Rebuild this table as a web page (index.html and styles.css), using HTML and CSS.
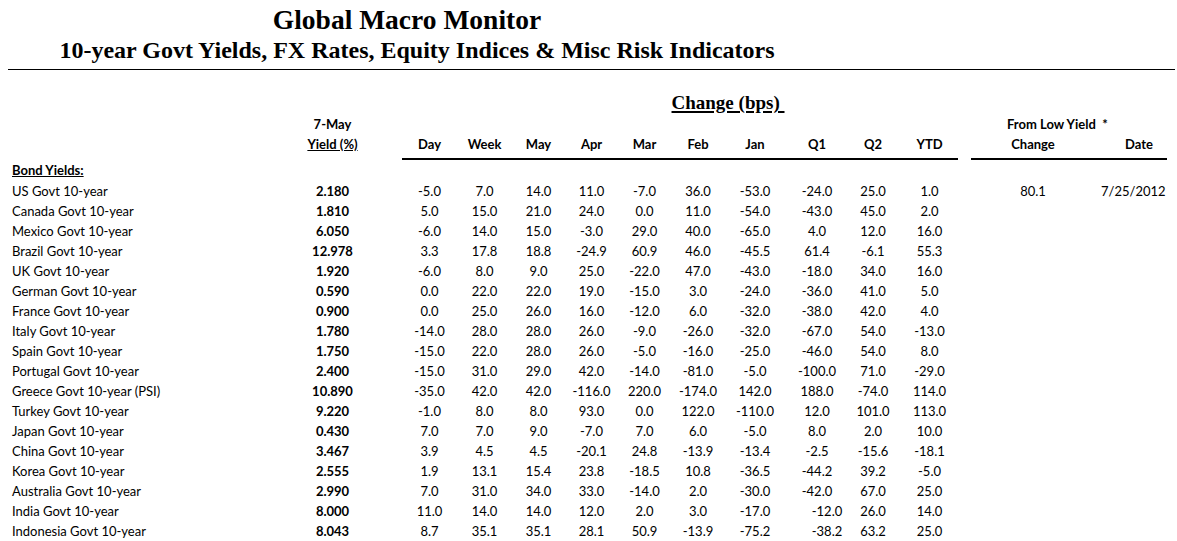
FILE: index.html
```html
<!DOCTYPE html>
<html>
<head>
<meta charset="utf-8">
<link rel="stylesheet" href="styles.css">
</head>
<body>
<header class="head">
  <h1 class="title">Global Macro Monitor</h1>
  <h2 class="subtitle">10-year Govt Yields, FX Rates, Equity Indices &amp; Misc Risk Indicators</h2>
</header>
<div class="rule"></div>
<table class="grid">
  <colgroup>
    <col class="c-label"><col class="c-yield"><col class="c-gap">
    <col class="c55"><col class="c55"><col class="c53"><col class="c53"><col class="c53"><col class="c54"><col class="c60"><col class="c60"><col class="c56"><col class="c57">
    <col class="c-gap2"><col class="c-chg"><col class="c-date">
  </colgroup>
  <thead>
    <tr class="r-top">
      <th colspan="8"></th>
      <th colspan="2" class="bps"><span>Change (bps)&nbsp;</span></th>
      <th colspan="6"></th>
    </tr>
    <tr class="r-h1">
      <th></th>
      <th class="hd">7-May</th>
      <th colspan="12"></th>
      <th colspan="2" class="low">From Low Yield &nbsp;*</th>
    </tr>
    <tr class="r-h2">
      <th></th>
      <th class="hd"><u>Yield (%)</u></th>
      <th></th>
      <th class="hd ul">Day</th><th class="hd ul">Week</th><th class="hd ul">May</th><th class="hd ul">Apr</th><th class="hd ul">Mar</th><th class="hd ul">Feb</th><th class="hd ul">Jan</th><th class="hd ul q1">Q1</th><th class="hd ul">Q2</th><th class="hd ul">YTD</th>
      <th></th>
      <th class="hd ul">Change</th><th class="hd ul dateh">Date</th>
    </tr>
  </thead>
  <tbody>
    <tr class="r-sec"><td class="label sec"><u>Bond Yields:</u></td><td colspan="15"></td></tr>
    <tr><td class="label">US Govt 10-year</td><td class="y">2.180</td><td></td><td>-5.0</td><td>7.0</td><td>14.0</td><td>11.0</td><td>-7.0</td><td>36.0</td><td>-53.0</td><td class="q1">-24.0</td><td>25.0</td><td>1.0</td><td></td><td>80.1</td><td class="date">7/25/2012</td></tr>
    <tr><td class="label">Canada Govt 10-year</td><td class="y">1.810</td><td></td><td>5.0</td><td>15.0</td><td>21.0</td><td>24.0</td><td>0.0</td><td>11.0</td><td>-54.0</td><td class="q1">-43.0</td><td>45.0</td><td>2.0</td><td></td><td></td><td></td></tr>
    <tr><td class="label">Mexico Govt 10-year</td><td class="y">6.050</td><td></td><td>-6.0</td><td>14.0</td><td>15.0</td><td>-3.0</td><td>29.0</td><td>40.0</td><td>-65.0</td><td class="q1">4.0</td><td>12.0</td><td>16.0</td><td></td><td></td><td></td></tr>
    <tr><td class="label">Brazil Govt 10-year</td><td class="y">12.978</td><td></td><td>3.3</td><td>17.8</td><td>18.8</td><td>-24.9</td><td>60.9</td><td>46.0</td><td>-45.5</td><td class="q1">61.4</td><td>-6.1</td><td>55.3</td><td></td><td></td><td></td></tr>
    <tr><td class="label">UK Govt 10-year</td><td class="y">1.920</td><td></td><td>-6.0</td><td>8.0</td><td>9.0</td><td>25.0</td><td>-22.0</td><td>47.0</td><td>-43.0</td><td class="q1">-18.0</td><td>34.0</td><td>16.0</td><td></td><td></td><td></td></tr>
    <tr><td class="label">German Govt 10-year</td><td class="y">0.590</td><td></td><td>0.0</td><td>22.0</td><td>22.0</td><td>19.0</td><td>-15.0</td><td>3.0</td><td>-24.0</td><td class="q1">-36.0</td><td>41.0</td><td>5.0</td><td></td><td></td><td></td></tr>
    <tr><td class="label">France Govt 10-year</td><td class="y">0.900</td><td></td><td>0.0</td><td>25.0</td><td>26.0</td><td>16.0</td><td>-12.0</td><td>6.0</td><td>-32.0</td><td class="q1">-38.0</td><td>42.0</td><td>4.0</td><td></td><td></td><td></td></tr>
    <tr><td class="label">Italy Govt 10-year</td><td class="y">1.780</td><td></td><td>-14.0</td><td>28.0</td><td>28.0</td><td>26.0</td><td>-9.0</td><td>-26.0</td><td>-32.0</td><td class="q1">-67.0</td><td>54.0</td><td>-13.0</td><td></td><td></td><td></td></tr>
    <tr><td class="label">Spain Govt 10-year</td><td class="y">1.750</td><td></td><td>-15.0</td><td>22.0</td><td>28.0</td><td>26.0</td><td>-5.0</td><td>-16.0</td><td>-25.0</td><td class="q1">-46.0</td><td>54.0</td><td>8.0</td><td></td><td></td><td></td></tr>
    <tr><td class="label">Portugal Govt 10-year</td><td class="y">2.400</td><td></td><td>-15.0</td><td>31.0</td><td>29.0</td><td>42.0</td><td>-14.0</td><td>-81.0</td><td>-5.0</td><td class="q1">-100.0</td><td>71.0</td><td>-29.0</td><td></td><td></td><td></td></tr>
    <tr><td class="label">Greece Govt 10-year (PSI)</td><td class="y">10.890</td><td></td><td>-35.0</td><td>42.0</td><td>42.0</td><td>-116.0</td><td>220.0</td><td>-174.0</td><td>142.0</td><td class="q1">188.0</td><td>-74.0</td><td>114.0</td><td></td><td></td><td></td></tr>
    <tr><td class="label">Turkey Govt 10-year</td><td class="y">9.220</td><td></td><td>-1.0</td><td>8.0</td><td>8.0</td><td>93.0</td><td>0.0</td><td>122.0</td><td>-110.0</td><td class="q1">12.0</td><td>101.0</td><td>113.0</td><td></td><td></td><td></td></tr>
    <tr><td class="label">Japan Govt 10-year</td><td class="y">0.430</td><td></td><td>7.0</td><td>7.0</td><td>9.0</td><td>-7.0</td><td>7.0</td><td>6.0</td><td>-5.0</td><td class="q1">8.0</td><td>2.0</td><td>10.0</td><td></td><td></td><td></td></tr>
    <tr><td class="label">China Govt 10-year</td><td class="y">3.467</td><td></td><td>3.9</td><td>4.5</td><td>4.5</td><td>-20.1</td><td>24.8</td><td>-13.9</td><td>-13.4</td><td class="q1">-2.5</td><td>-15.6</td><td>-18.1</td><td></td><td></td><td></td></tr>
    <tr><td class="label">Korea Govt 10-year</td><td class="y">2.555</td><td></td><td>1.9</td><td>13.1</td><td>15.4</td><td>23.8</td><td>-18.5</td><td>10.8</td><td>-36.5</td><td class="q1">-44.2</td><td>39.2</td><td>-5.0</td><td></td><td></td><td></td></tr>
    <tr><td class="label">Australia Govt 10-year</td><td class="y">2.990</td><td></td><td>7.0</td><td>31.0</td><td>34.0</td><td>33.0</td><td>-14.0</td><td>2.0</td><td>-30.0</td><td class="q1">-42.0</td><td>67.0</td><td>25.0</td><td></td><td></td><td></td></tr>
    <tr><td class="label">India Govt 10-year</td><td class="y">8.000</td><td></td><td>11.0</td><td>14.0</td><td>14.0</td><td>12.0</td><td>2.0</td><td>3.0</td><td>-17.0</td><td class="q1 sh">-12.0</td><td>26.0</td><td>14.0</td><td></td><td></td><td></td></tr>
    <tr><td class="label">Indonesia Govt 10-year</td><td class="y">8.043</td><td></td><td>8.7</td><td>35.1</td><td>35.1</td><td>28.1</td><td>50.9</td><td>-13.9</td><td>-75.2</td><td class="q1 sh">-38.2</td><td>63.2</td><td>25.0</td><td></td><td></td><td></td></tr>
  </tbody>
</table>
</body>
</html>
```
FILE: styles.css
```css
html, body {
  background: #ffffff;
}
body {
  margin: 8px 0 0 8px;
  color: #000000;
  font-family: Lato, "Open Sans", Arial, sans-serif;
  font-size: 13px;
}
.head {
  width: 818px;
  text-align: center;
  font-family: "Liberation Serif", "Times New Roman", serif;
}
.title {
  margin: 0;
  padding-right: 20px;
  font-size: 27.5px;
  line-height: 24px;
  font-weight: bold;
}
.subtitle {
  margin: 4px 0 0 0;
  font-size: 24px;
  line-height: 28px;
  font-weight: bold;
}
.rule {
  margin-top: 5px;
  width: 1167px;
  height: 0;
  border-top: 1px solid #000000;
}
.grid {
  table-layout: fixed;
  border-collapse: separate;
  border-spacing: 0;
  width: 1159px;
  margin-top: 22px;
}
.c-label { width: 282px; }
.c-yield { width: 85px; }
.c-gap { width: 27px; }
.c55 { width: 55px; }
.c53 { width: 53px; }
.c54 { width: 54px; }
.c56 { width: 56px; }
.c57 { width: 57px; }
.c60 { width: 60px; }
.c-gap2 { width: 13px; }
.c-chg { width: 124px; }
.c-date { width: 72px; }
.grid th, .grid td {
  padding: 0;
  text-align: center;
  white-space: nowrap;
  height: 20px;
  line-height: 20px;
  font-weight: normal;
}
.grid .hd {
  font-weight: bold;
}
.r-top th {
  height: 22px;
  line-height: 22px;
}
.bps {
  font-family: "Liberation Serif", "Times New Roman", serif;
  font-size: 19px;
}
.grid .bps {
  font-weight: bold;
}
.bps span {
  text-decoration: underline;
  text-decoration-thickness: 2px;
  text-underline-offset: 2px;
}
.grid .low {
  text-align: left;
  padding-left: 36px;
  font-weight: bold;
}
.r-h2 th {
  height: 24px;
  line-height: 20px;
  vertical-align: top;
}
.r-h2 .ul {
  border-bottom: 2px solid #000000;
}
.grid .q1 {
  padding-left: 4px;
}
.grid .sh {
  padding-left: 24px;
}
.grid .date {
  text-align: left;
  padding-left: 6px;
}
.grid .dateh {
  padding-left: 16px;
}
.r-sec td {
  height: 21px;
  line-height: 21px;
}
.grid .label {
  text-align: left;
  padding-left: 4px;
}
.grid .sec {
  font-weight: bold;
}
.grid .y {
  font-weight: bold;
}
```
